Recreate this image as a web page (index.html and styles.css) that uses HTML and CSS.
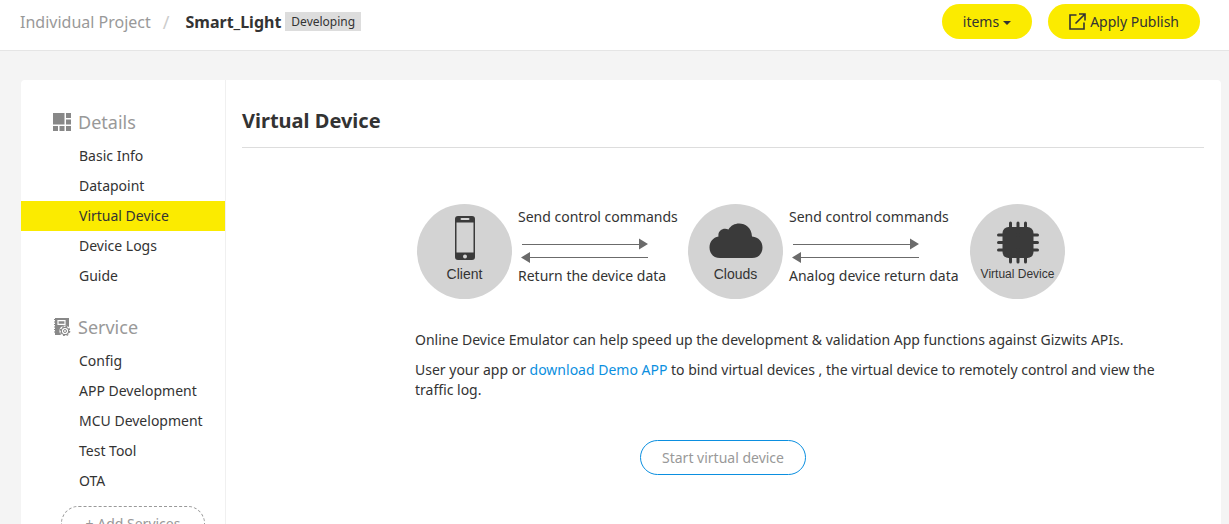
FILE: index.html
```html
<!DOCTYPE html>
<html lang="en">
<head>
<meta charset="utf-8">
<title>Virtual Device</title>
<link rel="stylesheet" href="styles.css">
</head>
<body>
<header class="topbar">
  <nav class="crumbs">
    <a class="crumb-link" href="#">Individual Project</a>
    <span class="crumb-sep">/</span>
    <strong class="crumb-current">Smart_Light</strong>
    <span class="badge">Developing</span>
  </nav>
  <div class="actions">
    <button class="pill" type="button">items
      <svg class="caret" width="8" height="4" viewBox="0 0 8 4"><path d="M0 0h8L4 4z" fill="#333"/></svg>
    </button>
    <button class="pill" type="button">
      <svg width="17" height="17" viewBox="0 0 17 17" fill="none" stroke="#333" stroke-width="1.6"><path d="M7.500 2H1v14h14V9.500M10 1h6v6.500M16 1L6.500 10.500"/></svg>
      Apply Publish
    </button>
  </div>
</header>

<div class="card">
  <aside class="sidebar">
    <section class="group">
      <h2 class="group-title">
        <svg width="18" height="18" viewBox="0 0 18 18" fill="#888"><path d="M0 0h11.500v11.500H0zM13 0h5v5h-5zM13 6.500h5v5h-5zM0 13h5v5H0zM6.500 13h5v5h-5zM13 13h5v5h-5z"/></svg>
        Details
      </h2>
      <ul class="menu">
        <li><a href="#">Basic Info</a></li>
        <li><a href="#">Datapoint</a></li>
        <li><a class="active" href="#">Virtual Device</a></li>
        <li><a href="#">Device Logs</a></li>
        <li><a href="#">Guide</a></li>
      </ul>
    </section>
    <section class="group">
      <h2 class="group-title">
        <svg width="18" height="18" viewBox="0 0 18 18"><path d="M2 0h14v17H2z" fill="#888"/><path d="M1 1.500h1M1 4h1M1 6.500h1M1 9h1M1 11.500h1M1 14h1" stroke="#888"/><path d="M5 2.700h7v3.600H5z" fill="none" stroke="#fff" stroke-width="1.200"/><circle cx="12" cy="13" r="5.600" fill="#fff"/><circle cx="12" cy="13" r="3.700" fill="none" stroke="#888" stroke-width="1.200"/><circle cx="12" cy="13" r="4.700" fill="none" stroke="#888" stroke-width="1.200" stroke-dasharray="1.800 1.890"/><circle cx="12" cy="13" r="1.500" fill="none" stroke="#888"/></svg>
        Service
      </h2>
      <ul class="menu">
        <li><a href="#">Config</a></li>
        <li><a href="#">APP Development</a></li>
        <li><a href="#">MCU Development</a></li>
        <li><a href="#">Test Tool</a></li>
        <li><a href="#">OTA</a></li>
      </ul>
      <button class="add" type="button">+ Add Services</button>
    </section>
  </aside>

  <main class="main">
    <h1 class="title">Virtual Device</h1>
    <div class="content">
      <div class="flow">
        <div class="node">
          <svg width="54" height="50" viewBox="0 0 54 50"><rect x="17" y="2" width="20" height="44" rx="3" fill="#3a3a3a"/><path d="M18.500 8.500h17v30h-17z" fill="#d3d3d3"/><path d="M23.500 5h7" stroke="#d3d3d3" stroke-width="2" stroke-linecap="round"/><circle cx="27" cy="42.500" r="2" fill="#d3d3d3"/></svg>
          <span>Client</span>
        </div>
        <div class="exchange">
          <span>Send control commands</span>
          <svg width="128" height="26" viewBox="0 0 128 26" fill="#6b6b6b"><path d="M1 6h117V.5l9 5.500-9 5.500V7H1zM127 19H9v-5L0 19.500l9 5.500v-5h118z"/></svg>
          <span>Return the device data</span>
        </div>
        <div class="node">
          <svg width="54" height="50" viewBox="0 0 54 50"><path d="M11 44C4 44 .5 39 .5 33.500.5 28 4 23.500 9.500 22.500c-1-6 5-9.500 10-7C25 5.500 42.500 8 43 22.500 50 23 53.500 28 53.500 33.500S50 44 43 44z" fill="#3a3a3a"/></svg>
          <span>Clouds</span>
        </div>
        <div class="exchange exchange-wide">
          <span>Send control commands</span>
          <svg width="128" height="26" viewBox="0 0 128 26" fill="#6b6b6b"><path d="M1 6h117V.5l9 5.500-9 5.500V7H1zM127 19H9v-5L0 19.500l9 5.500v-5h118z"/></svg>
          <span>Analog device return data</span>
        </div>
        <div class="node node-small">
          <svg width="54" height="50" viewBox="0 0 54 50"><rect x="11.500" y="13" width="31" height="31" rx="6" fill="#3a3a3a"/><path d="M19.500 9v39M27 9v39M34.500 9v39M7.500 21h39M7.500 28.500h39M7.500 36h39" stroke="#3a3a3a" stroke-width="3" stroke-linecap="round"/></svg>
          <span>Virtual Device</span>
        </div>
      </div>
      <p class="text">Online Device Emulator can help speed up the development &amp; validation App functions against Gizwits APIs.</p>
      <p class="text">User your app or <a class="link" href="#">download Demo APP</a> to bind virtual devices , the virtual device to remotely control and view the traffic log.</p>
    </div>
    <button class="start" type="button">Start virtual device</button>
  </main>
</div>
</body>
</html>
```
FILE: styles.css
```css
* { box-sizing: border-box; }
html { overflow: hidden; }
body {
  margin: 0;
  background: #f4f4f4;
  color: #333;
  font: 14px/20px "Noto Sans", "Open Sans", sans-serif;
}
a { color: inherit; text-decoration: none; }
button { font: inherit; color: inherit; cursor: pointer; }
svg { flex: none; }

.topbar {
  display: flex;
  justify-content: space-between;
  align-items: flex-start;
  padding: 4px 29px 11px 20px;
  background: #fff;
  border-bottom: 1px solid #e5e5e5;
}
.crumbs {
  display: flex;
  align-items: center;
  height: 35px;
  font-size: 16px;
}
.crumb-link { color: #999; }
.crumb-sep { margin: 0 16px 0 12px; color: #ccc; font-size: 18px; }
.crumb-current { font-weight: 700; }
.badge {
  margin-left: 4px;
  padding: 0 6px;
  background: #ddd;
  font-size: 12px;
  line-height: 19px;
}
.actions { display: flex; gap: 16px; }
.pill {
  display: flex;
  align-items: center;
  gap: 4px;
  height: 35px;
  padding: 0 21px;
  border: 0;
  border-radius: 18px;
  background: #fbeb00;
}
.caret { margin-top: 3px; }

.card {
  display: flex;
  margin: 29px 8px 0 21px;
  background: #fff;
  border-radius: 4px;
}
.sidebar {
  flex: none;
  width: 205px;
  padding-top: 23px;
  border-right: 1px solid #f0f0f0;
}
.group { margin-bottom: 17px; }
.group-title {
  display: flex;
  align-items: center;
  gap: 7px;
  margin: 0;
  padding-left: 32px;
  color: #999;
  font-size: 18px;
  font-weight: 400;
  line-height: 38px;
}
.menu { margin: 0; padding: 0; list-style: none; }
.menu a { display: block; padding-left: 58px; line-height: 30px; }
.menu .active { background: #fbeb00; }
.add {
  display: block;
  width: 144px;
  height: 35px;
  margin: 10px 0 0 40px;
  padding: 0;
  border: 1px dashed #999;
  border-radius: 18px;
  background: #fff;
  color: #999;
}

.main { flex: 1; min-width: 0; padding: 24px 17px 40px 16px; }
.title {
  margin: 0;
  padding-bottom: 10px;
  border-bottom: 1px solid #ddd;
  font-size: 20px;
  line-height: 33px;
}
.content { padding: 56px 20px 0 173px; }
.flow { display: flex; margin: 0 0 31px 2px; }
.node {
  flex: none;
  display: flex;
  flex-direction: column;
  align-items: center;
  width: 95px;
  height: 95px;
  padding-top: 10px;
  border-radius: 50%;
  background: #d3d3d3;
  font-family: "Liberation Sans", Arial, sans-serif;
}
.node-small { font-size: 12px; }
.exchange {
  display: flex;
  flex: none;
  flex-direction: column;
  width: 176px;
  padding: 3px 0 0 6px;
  white-space: nowrap;
}
.exchange-wide { width: 187px; }
.exchange svg { margin: 11px 0 2px 3px; }
.text { margin: 0 0 10px; }
.link { color: #0b8fe0; }
.start {
  display: block;
  height: 35px;
  margin: 40px auto 0;
  padding: 0 21px;
  border: 1px solid #0b8fe0;
  border-radius: 18px;
  background: #fff;
  color: #999;
}
```
